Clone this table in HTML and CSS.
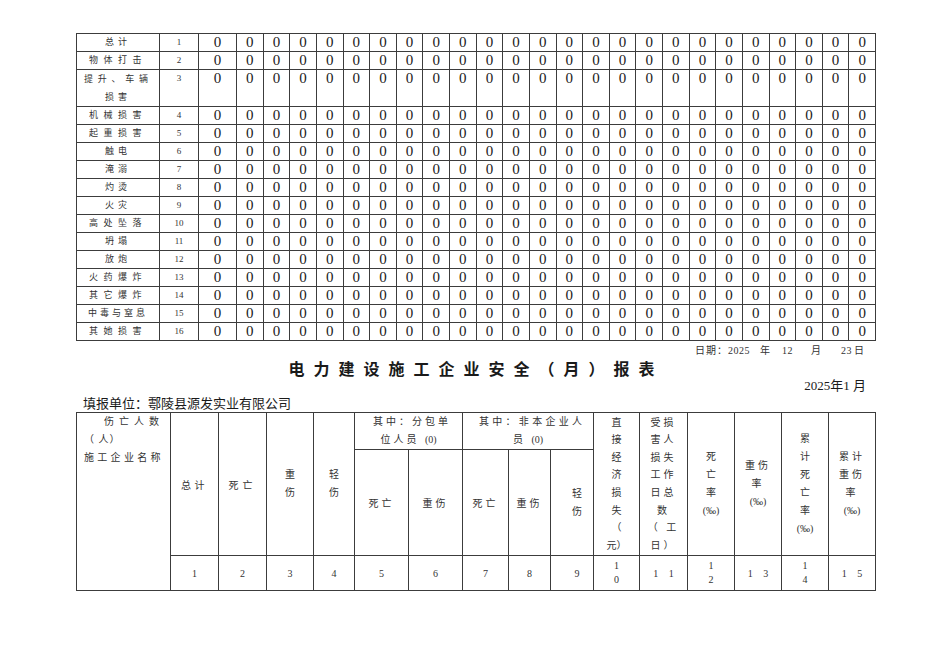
FILE: index.html
```html
<!DOCTYPE html>
<html lang="zh-CN">
<head>
<meta charset="utf-8">
<title>电力建设施工企业安全（月）报表</title>
<link rel="stylesheet" href="styles.css">
</head>
<body>
<div class="page">
  <table class="t1">
    <colgroup>
      <col class="c-lab"><col class="c-num"><col class="c-first">
      <col><col><col><col><col><col><col><col><col><col><col><col>
      <col><col><col><col><col><col><col><col><col><col><col><col>
    </colgroup>
    <tr><td class="lab s2">总计</td><td class="num">1</td><td>0</td><td>0</td><td>0</td><td>0</td><td>0</td><td>0</td><td>0</td><td>0</td><td>0</td><td>0</td><td>0</td><td>0</td><td>0</td><td>0</td><td>0</td><td>0</td><td>0</td><td>0</td><td>0</td><td>0</td><td>0</td><td>0</td><td>0</td><td>0</td><td>0</td></tr>
    <tr><td class="lab s4">物体打击</td><td class="num">2</td><td>0</td><td>0</td><td>0</td><td>0</td><td>0</td><td>0</td><td>0</td><td>0</td><td>0</td><td>0</td><td>0</td><td>0</td><td>0</td><td>0</td><td>0</td><td>0</td><td>0</td><td>0</td><td>0</td><td>0</td><td>0</td><td>0</td><td>0</td><td>0</td><td>0</td></tr>
    <tr class="dbl"><td class="lab"><div class="just">提升、车辆</div><div class="s2">损害</div></td><td class="num">3</td><td>0</td><td>0</td><td>0</td><td>0</td><td>0</td><td>0</td><td>0</td><td>0</td><td>0</td><td>0</td><td>0</td><td>0</td><td>0</td><td>0</td><td>0</td><td>0</td><td>0</td><td>0</td><td>0</td><td>0</td><td>0</td><td>0</td><td>0</td><td>0</td><td>0</td></tr>
    <tr><td class="lab s4">机械损害</td><td class="num">4</td><td>0</td><td>0</td><td>0</td><td>0</td><td>0</td><td>0</td><td>0</td><td>0</td><td>0</td><td>0</td><td>0</td><td>0</td><td>0</td><td>0</td><td>0</td><td>0</td><td>0</td><td>0</td><td>0</td><td>0</td><td>0</td><td>0</td><td>0</td><td>0</td><td>0</td></tr>
    <tr><td class="lab s4">起重损害</td><td class="num">5</td><td>0</td><td>0</td><td>0</td><td>0</td><td>0</td><td>0</td><td>0</td><td>0</td><td>0</td><td>0</td><td>0</td><td>0</td><td>0</td><td>0</td><td>0</td><td>0</td><td>0</td><td>0</td><td>0</td><td>0</td><td>0</td><td>0</td><td>0</td><td>0</td><td>0</td></tr>
    <tr><td class="lab s2">触电</td><td class="num">6</td><td>0</td><td>0</td><td>0</td><td>0</td><td>0</td><td>0</td><td>0</td><td>0</td><td>0</td><td>0</td><td>0</td><td>0</td><td>0</td><td>0</td><td>0</td><td>0</td><td>0</td><td>0</td><td>0</td><td>0</td><td>0</td><td>0</td><td>0</td><td>0</td><td>0</td></tr>
    <tr><td class="lab s2">淹溺</td><td class="num">7</td><td>0</td><td>0</td><td>0</td><td>0</td><td>0</td><td>0</td><td>0</td><td>0</td><td>0</td><td>0</td><td>0</td><td>0</td><td>0</td><td>0</td><td>0</td><td>0</td><td>0</td><td>0</td><td>0</td><td>0</td><td>0</td><td>0</td><td>0</td><td>0</td><td>0</td></tr>
    <tr><td class="lab s2">灼烫</td><td class="num">8</td><td>0</td><td>0</td><td>0</td><td>0</td><td>0</td><td>0</td><td>0</td><td>0</td><td>0</td><td>0</td><td>0</td><td>0</td><td>0</td><td>0</td><td>0</td><td>0</td><td>0</td><td>0</td><td>0</td><td>0</td><td>0</td><td>0</td><td>0</td><td>0</td><td>0</td></tr>
    <tr><td class="lab s2">火灾</td><td class="num">9</td><td>0</td><td>0</td><td>0</td><td>0</td><td>0</td><td>0</td><td>0</td><td>0</td><td>0</td><td>0</td><td>0</td><td>0</td><td>0</td><td>0</td><td>0</td><td>0</td><td>0</td><td>0</td><td>0</td><td>0</td><td>0</td><td>0</td><td>0</td><td>0</td><td>0</td></tr>
    <tr><td class="lab s4">高处坠落</td><td class="num">10</td><td>0</td><td>0</td><td>0</td><td>0</td><td>0</td><td>0</td><td>0</td><td>0</td><td>0</td><td>0</td><td>0</td><td>0</td><td>0</td><td>0</td><td>0</td><td>0</td><td>0</td><td>0</td><td>0</td><td>0</td><td>0</td><td>0</td><td>0</td><td>0</td><td>0</td></tr>
    <tr><td class="lab s2">坍塌</td><td class="num">11</td><td>0</td><td>0</td><td>0</td><td>0</td><td>0</td><td>0</td><td>0</td><td>0</td><td>0</td><td>0</td><td>0</td><td>0</td><td>0</td><td>0</td><td>0</td><td>0</td><td>0</td><td>0</td><td>0</td><td>0</td><td>0</td><td>0</td><td>0</td><td>0</td><td>0</td></tr>
    <tr><td class="lab s2">放炮</td><td class="num">12</td><td>0</td><td>0</td><td>0</td><td>0</td><td>0</td><td>0</td><td>0</td><td>0</td><td>0</td><td>0</td><td>0</td><td>0</td><td>0</td><td>0</td><td>0</td><td>0</td><td>0</td><td>0</td><td>0</td><td>0</td><td>0</td><td>0</td><td>0</td><td>0</td><td>0</td></tr>
    <tr><td class="lab s4">火药爆炸</td><td class="num">13</td><td>0</td><td>0</td><td>0</td><td>0</td><td>0</td><td>0</td><td>0</td><td>0</td><td>0</td><td>0</td><td>0</td><td>0</td><td>0</td><td>0</td><td>0</td><td>0</td><td>0</td><td>0</td><td>0</td><td>0</td><td>0</td><td>0</td><td>0</td><td>0</td><td>0</td></tr>
    <tr><td class="lab s4">其它爆炸</td><td class="num">14</td><td>0</td><td>0</td><td>0</td><td>0</td><td>0</td><td>0</td><td>0</td><td>0</td><td>0</td><td>0</td><td>0</td><td>0</td><td>0</td><td>0</td><td>0</td><td>0</td><td>0</td><td>0</td><td>0</td><td>0</td><td>0</td><td>0</td><td>0</td><td>0</td><td>0</td></tr>
    <tr><td class="lab s5">中毒与窒息</td><td class="num">15</td><td>0</td><td>0</td><td>0</td><td>0</td><td>0</td><td>0</td><td>0</td><td>0</td><td>0</td><td>0</td><td>0</td><td>0</td><td>0</td><td>0</td><td>0</td><td>0</td><td>0</td><td>0</td><td>0</td><td>0</td><td>0</td><td>0</td><td>0</td><td>0</td><td>0</td></tr>
    <tr><td class="lab s4">其她损害</td><td class="num">16</td><td>0</td><td>0</td><td>0</td><td>0</td><td>0</td><td>0</td><td>0</td><td>0</td><td>0</td><td>0</td><td>0</td><td>0</td><td>0</td><td>0</td><td>0</td><td>0</td><td>0</td><td>0</td><td>0</td><td>0</td><td>0</td><td>0</td><td>0</td><td>0</td><td>0</td></tr>
  </table>

  <div class="date"><span class="dk">日期：</span><span class="dn">2025</span><span class="d1">年</span><span class="dn d2">12</span><span class="d3">月</span><span class="dn d4">23</span><span class="d5">日</span></div>
  <div class="title">电力建设施工企业安全（月）报表</div>
  <div class="ym">2025年1 月</div>
  <div class="unit">填报单位：鄠陵县源发实业有限公司</div>

  <table class="t2">
    <colgroup>
      <col class="w94"><col class="w48"><col class="w48"><col class="w47"><col class="w41">
      <col class="w54"><col class="w54"><col class="w46"><col class="w42"><col class="w43">
      <col class="w46"><col class="w48"><col class="w47"><col class="w47"><col class="w47"><col class="w47">
    </colgroup>
    <tr class="ra">
      <td rowspan="3" class="corner"><div class="cn1">伤亡人数</div><div class="cn2">（ 人）</div><div class="cn3">施工企业名称</div></td>
      <td rowspan="2" class="mid l35">总计</td>
      <td rowspan="2" class="mid l4">死亡</td>
      <td rowspan="2" class="mid vt">重<br>伤</td>
      <td rowspan="2" class="mid vt">轻<br>伤</td>
      <td colspan="2" class="top"><div class="jl p1">其中：分包单</div><div class="l3">位人员 <span class="n0">(0)</span></div></td>
      <td colspan="3" class="top"><div class="jl p2">其中：非本企业人</div><div class="l3">员 <span class="n0">(0)</span></div></td>
      <td rowspan="2" class="mid vt tall">直<br>接<br>经<br>济<br>损<br>失<br>（<br>元）</td>
      <td rowspan="2" class="mid vt tall l3">受损<br>害人<br>损失<br>工作<br>日总<br>数<br>（ 工<br>日）</td>
      <td rowspan="2" class="mid vt">死<br>亡<br>率<br><span class="n0">(‰)</span></td>
      <td rowspan="2" class="mid vt l3">重伤<br>率<br><span class="n0">(‰)</span></td>
      <td rowspan="2" class="mid vt">累<br>计<br>死<br>亡<br>率<br><span class="n0">(‰)</span></td>
      <td rowspan="2" class="mid vt l3">累计<br>重伤<br>率<br><span class="n0">(‰)</span></td>
    </tr>
    <tr class="rb">
      <td class="mid l3">死亡</td>
      <td class="mid l3">重伤</td>
      <td class="mid l3">死亡</td>
      <td class="mid l3">重伤</td>
      <td class="mid vt qs">轻<br>伤</td>
    </tr>
    <tr class="rn">
      <td>1</td><td>2</td><td>3</td><td>4</td><td>5</td><td>6</td><td>7</td><td>8</td><td class="r9">9</td>
      <td class="two">1<br>0</td>
      <td class="sp">1 1</td>
      <td class="two">1<br>2</td>
      <td class="sp">1 3</td>
      <td class="two">1<br>4</td>
      <td class="sp">1 5</td>
    </tr>
  </table>
</div>
</body>
</html>
```

FILE: styles.css
```css
* { box-sizing: border-box; }

html, body {
  margin: 0;
  background: #ffffff;
}

body {
  color: #222222;
  font-family: "Liberation Serif", "Noto Sans CJK SC", serif;
}

.page {
  width: 950px;
  padding: 33px 0 0 76px;
}

/* ---------- top table ---------- */
.t1 {
  width: 800px;
  border-collapse: collapse;
  table-layout: fixed;
}

.c-lab { width: 83px; }
.c-num { width: 39px; }
.c-first { width: 38px; }

.t1 tr { height: 18px; }
.t1 tr.dbl { height: 37px; }

.t1 td {
  border: 1px solid #3c3c3c;
  padding: 0;
  height: 18px;
  line-height: 16px;
  vertical-align: top;
  text-align: center;
  font-size: 15px;
  color: #1a1a1a;
}

.t1 tr.dbl td { height: 37px; }

.t1 td.lab {
  font-family: "Noto Sans CJK SC", sans-serif;
  font-size: 9px;
  line-height: 16px;
  color: #333333;
}

.t1 tr.dbl td.lab { line-height: 18px; }

.t1 td.num {
  font-size: 9px;
  line-height: 16px;
  color: #333333;
}

.s2 { letter-spacing: 4px; }
.s4 { letter-spacing: 5.5px; }
.s5 { letter-spacing: 3px; }

.just {
  text-align: justify;
  text-align-last: justify;
  padding: 0 11px 0 7px;
}

/* ---------- captions ---------- */
.date {
  display: flex;
  align-items: baseline;
  margin-top: 3px;
  height: 14px;
  line-height: 14px;
  padding-left: 619px;
  font-size: 10px;
  color: #333333;
}

.dk { letter-spacing: 1px; }
.dn { letter-spacing: 0.5px; font-size: 10px; }
.d1 { margin-left: 10px; }
.d2 { margin-left: 12px; }
.d3 { margin-left: 18px; }
.d4 { margin-left: 20px; }
.d5 { margin-left: 2px; }

.title {
  width: 800px;
  height: 21px;
  line-height: 21px;
  text-align: center;
  font-family: "Noto Sans CJK SC", sans-serif;
  font-weight: bold;
  font-size: 16px;
  letter-spacing: 9px;
  color: #1a1a1a;
}

.ym {
  width: 800px;
  height: 14px;
  line-height: 14px;
  text-align: right;
  padding-right: 10px;
  font-size: 13px;
  color: #1a1a1a;
}

.unit {
  height: 19px;
  line-height: 16px;
  padding: 3px 0 0 7px;
  font-size: 13px;
  color: #1a1a1a;
}

/* ---------- bottom table ---------- */
.t2 {
  width: 799px;
  border-collapse: collapse;
  table-layout: fixed;
}

.w94 { width: 94px; }
.w48 { width: 48px; }
.w47 { width: 47px; }
.w41 { width: 41px; }
.w54 { width: 54px; }
.w46 { width: 46px; }
.w42 { width: 42px; }
.w43 { width: 43px; }

.t2 td {
  border: 1px solid #3c3c3c;
  padding: 0;
  text-align: center;
  font-family: "Liberation Serif", "Noto Sans CJK SC", serif;
  font-size: 10px;
  color: #333333;
}

.t2 .ra td { height: 36px; }
.t2 .rb td { height: 106px; }
.t2 .rn td { height: 35px; vertical-align: middle; }

.t2 td.mid { vertical-align: middle; }
.t2 td.top { vertical-align: top; line-height: 18px; }
.t2 td.vt { line-height: 18px; }
.t2 td.tall { line-height: 17.6px; }

.t2 td.corner {
  vertical-align: top;
  text-align: left;
  line-height: 18px;
  padding-left: 7px;
}

.cn1 { padding-left: 20px; letter-spacing: 5px; }
.cn2 { letter-spacing: 1px; }
.cn3 { letter-spacing: 3.3px; }

.l3 { letter-spacing: 3px; }
.l35 { letter-spacing: 3.5px; }
.l4 { letter-spacing: 4px; }
.n0 { letter-spacing: 0; }

.jl {
  text-align: justify;
  text-align-last: justify;
}
.p1 { padding: 0 14px 0 18px; }
.p2 { padding: 0 11px 0 16px; }

.t2 td.qs { padding-left: 10px; }
.t2 td.r9 { padding-left: 10px; }

.t2 td.two { line-height: 14px; }
.t2 td.sp { letter-spacing: 4px; padding-left: 4px; }
```
